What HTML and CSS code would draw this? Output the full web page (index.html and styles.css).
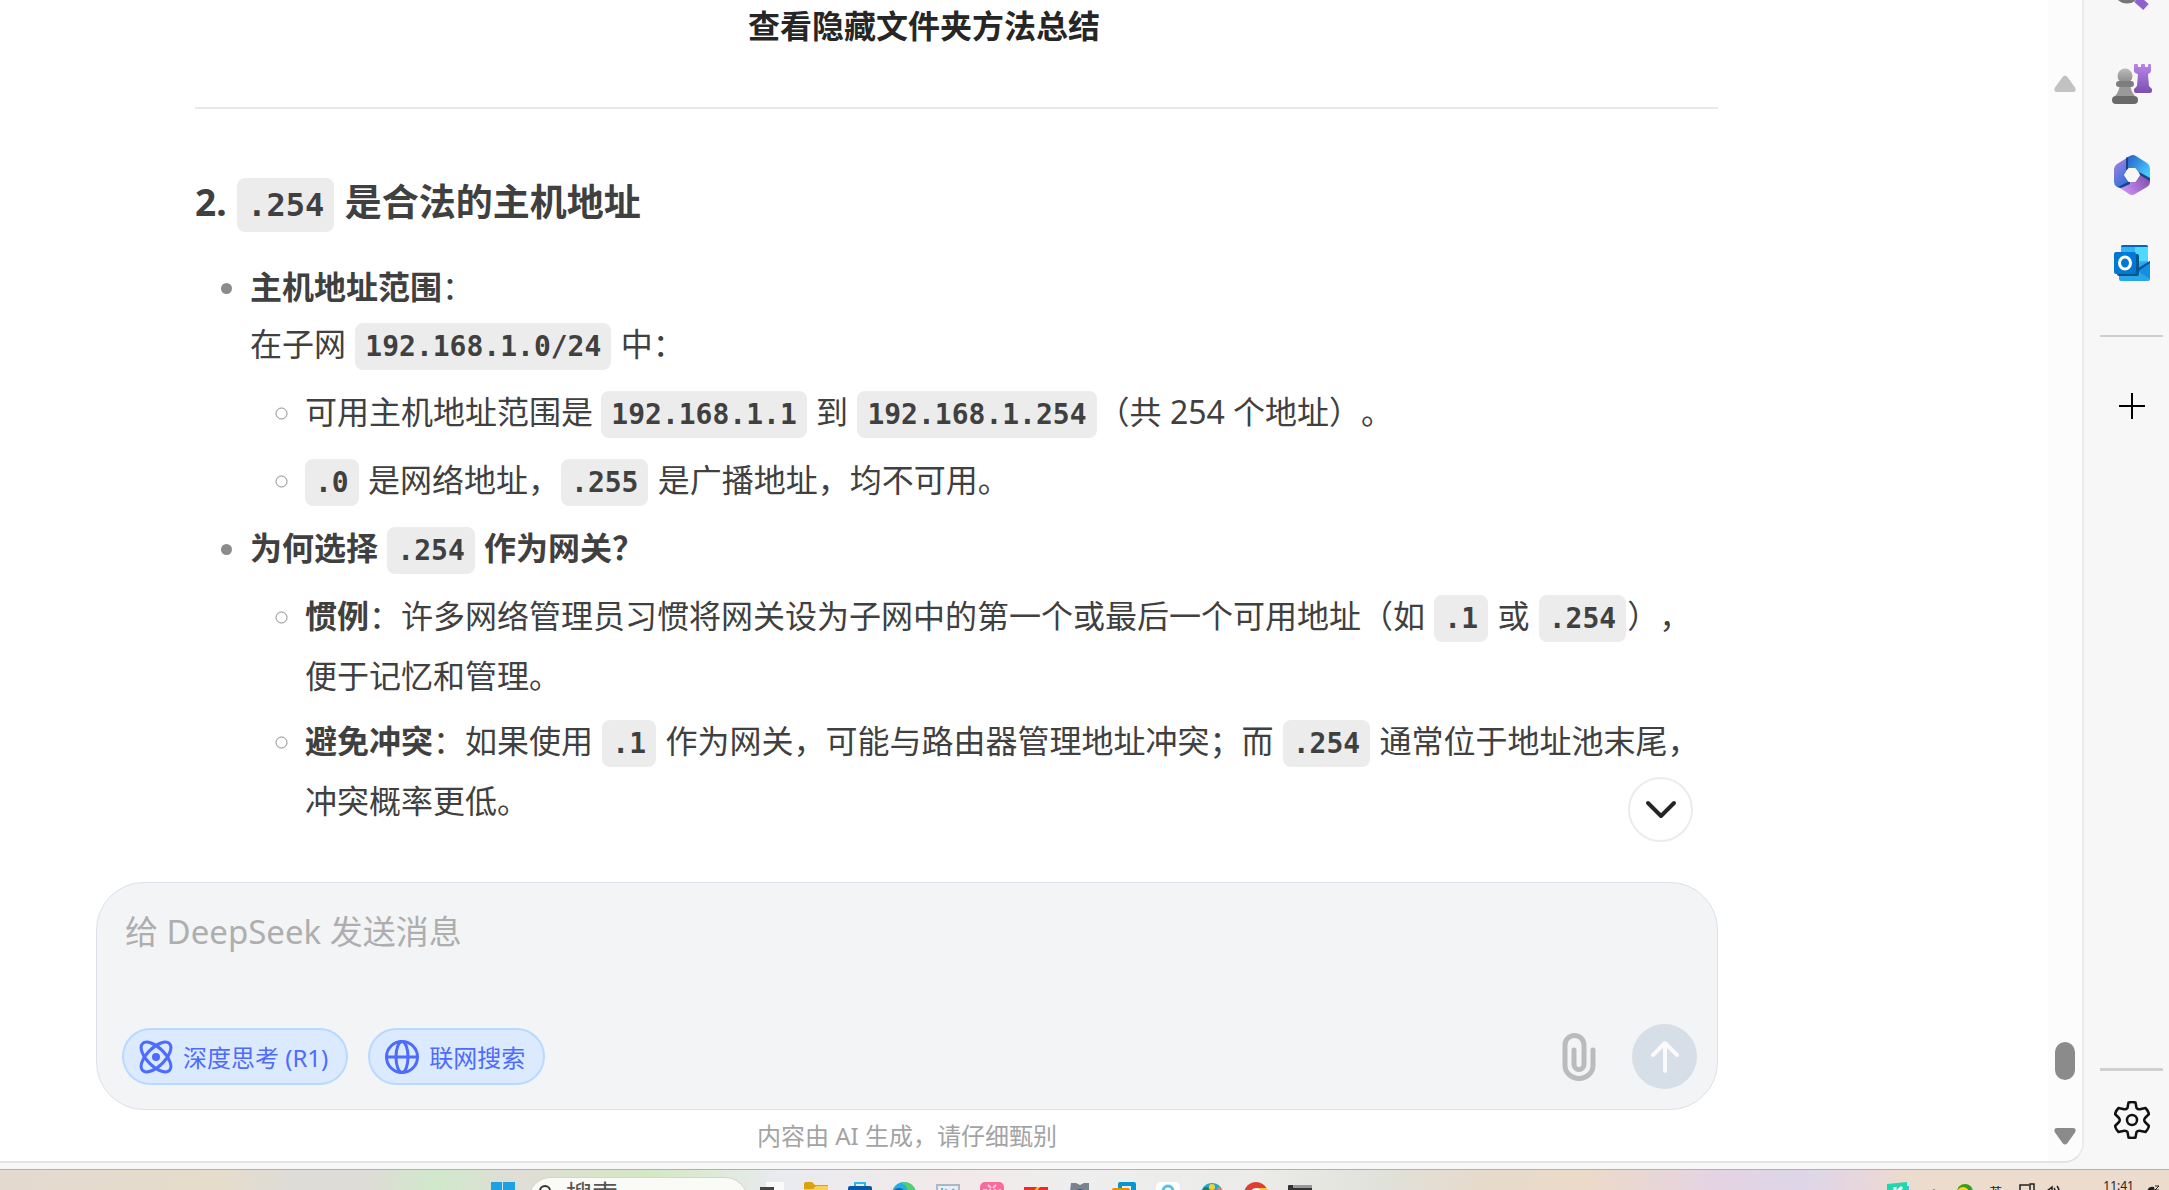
FILE: index.html
```html
<!DOCTYPE html>
<html lang="zh-CN">

<head>
    <meta charset="UTF-8">
    <meta name="viewport" content="width=device-width, initial-scale=1.0">
    <title>查看隐藏文件夹方法总结 - DeepSeek</title>
    <link rel="stylesheet" href="styles.css">
</head>

<body>
    <div class="browser">
        <div class="page">
            <main class="chat">
                <header class="chat-header">
                    <h1>查看隐藏文件夹方法总结</h1>
                </header>
                <div class="messages">
                    <hr>
                    <h3>2. <code>.254</code> 是合法的主机地址</h3>
                    <ul>
                        <li>
                            <strong>主机地址范围</strong>：<br>
                            在子网 <code>192.168.1.0/24</code> 中：
                            <ul>
                                <li>可用主机地址范围是 <code>192.168.1.1</code> 到 <code>192.168.1.254</code>（共 254 个地址）。</li>
                                <li><code>.0</code> 是网络地址，<code>.255</code> 是广播地址，均不可用。</li>
                            </ul>
                        </li>
                        <li>
                            <strong>为何选择 <code>.254</code> 作为网关？</strong>
                            <ul>
                                <li><strong>惯例</strong>：许多网络管理员习惯将网关设为子网中的第一个或最后一个可用地址（如 <code>.1</code> 或 <code>.254</code>），便于记忆和管理。</li>
                                <li><strong>避免冲突</strong>：如果使用 <code>.1</code> 作为网关，可能与路由器管理地址冲突；而 <code>.254</code> 通常位于地址池末尾，冲突概率更低。</li>
                            </ul>
                        </li>
                    </ul>
                </div>
                <div class="composer-wrap">
                    <button class="scroll-down" aria-label="滚动到底部">
                        <svg width="32" height="20" viewBox="0 0 32 20"><path d="M3 3l13 13L29 3" fill="none" stroke="#262626" stroke-width="4" stroke-linecap="round" stroke-linejoin="round"/></svg>
                    </button>
                    <form class="composer">
                        <textarea rows="2" placeholder="给 DeepSeek 发送消息" aria-label="消息"></textarea>
                        <div class="tools">
                            <button type="button" class="pill">
                                <svg width="34" height="34" viewBox="0 0 34 34" fill="none" stroke="currentColor" stroke-width="3"><ellipse cx="17" cy="17" rx="19" ry="9" transform="rotate(45 17 17)"/><ellipse cx="17" cy="17" rx="19" ry="9" transform="rotate(-45 17 17)"/><circle cx="17" cy="17" r="4" fill="currentColor" stroke="none"/></svg>
                                深度思考 (R1)
                            </button>
                            <button type="button" class="pill">
                                <svg width="34" height="34" viewBox="0 0 34 34" fill="none" stroke="currentColor" stroke-width="3"><circle cx="17" cy="17" r="15.5"/><ellipse cx="17" cy="17" rx="6" ry="15.5"/><path d="M1.500 17h31"/></svg>
                                联网搜索
                            </button>
                            <button type="button" class="attach" aria-label="上传附件">
                                <svg width="34" height="48" viewBox="0 0 34 48"><path d="M31 17v15.500a14 13 0 0 1-28 0V12a9.500 9.500 0 0 1 19 0v19.500a5 5 0 0 1-10 0V17" fill="none" stroke="#bbb" stroke-width="5" stroke-linecap="round"/></svg>
                            </button>
                            <button type="submit" class="send" aria-label="发送">
                                <svg width="30" height="34" viewBox="0 0 30 34"><path d="M15 31V3M3 15L15 3l12 12" fill="none" stroke="#fafafa" stroke-width="4" stroke-linecap="round" stroke-linejoin="round"/></svg>
                            </button>
                        </div>
                    </form>
                    <p class="notice">内容由 AI 生成，请仔细甄别</p>
                </div>
            </main>
            <div class="scrollbar">
                <svg width="22" height="17" viewBox="0 0 22 17"><path d="M8.500 2Q11 -1 13.500 2L21 12.500Q23 17 19 17H3Q-1 17 1 12.500Z" fill="#c2c2c2"/></svg>
                <div class="track"><div class="thumb"></div></div>
                <svg width="22" height="17" viewBox="0 0 22 17"><path d="M8.500 15Q11 18 13.500 15L21 4.500Q23 0 19 0H3Q-1 0 1 4.500Z" fill="#8b8b8b"/></svg>
            </div>
        </div>
        <aside class="sidebar">
            <button class="side-search" aria-label="搜索">
                <svg width="40" height="40" viewBox="0 0 40 40"><defs><linearGradient id="lilac" x1="0" y1="0" x2="0" y2="1"><stop offset="0" stop-color="#bb84ea"/><stop offset="1" stop-color="#7a50b0"/></linearGradient><linearGradient id="grey" x1="0" y1="0" x2="0" y2="1"><stop offset="0" stop-color="#bbb"/><stop offset="1" stop-color="#888"/></linearGradient></defs><circle cx="15" cy="18" r="11" fill="none" stroke="#777" stroke-width="5"/><path d="M25 27l9 8" stroke="#9060cc" stroke-width="8"/></svg>
            </button>
            <button aria-label="游戏">
                <svg width="40" height="41" viewBox="0 0 40 41"><path d="M22 1q0-1 1-1h2q1 0 1 1v2h3V1q0-1 1-1h2q1 0 1 1v2h3V1q0-1 1-1h1q1 0 1 1v6q0 2-3 3l1 12 3 3v2q0 2-2 2H24q-2 0-2-2v-2l3-3 1-12q-4-1-4-3z" fill="url(#lilac)"/><path d="M8 20h10q1 8 5 12H3q4-4 5-12z" fill="#999"/><circle cx="13" cy="12" r="7.500" fill="url(#grey)"/><rect x="4" y="17" width="18" height="6" rx="3" fill="#7d7d7d"/><rect y="32" width="26" height="8" rx="4" fill="#6a6a6a"/></svg>
            </button>
            <button aria-label="Microsoft 365">
                <svg width="36" height="40" viewBox="0 0 36 40"><defs><linearGradient id="m1" x1="0" y1="0" x2="0.500" y2="1"><stop offset="0" stop-color="#b583e6"/><stop offset="1" stop-color="#2f73d8"/></linearGradient><linearGradient id="m2" x1="0" y1="0" x2="1" y2="0.700"><stop offset="0" stop-color="#2458c4"/><stop offset="1" stop-color="#48cfff"/></linearGradient><linearGradient id="m3" x1="0" y1="0.500" x2="1" y2="0"><stop offset="0" stop-color="#ca8cf5"/><stop offset="1" stop-color="#74489f"/></linearGradient></defs><path d="M16 1L3 9q-3 2-3 5v13q0 3 3 5l3 1 10-6-4-7V14l4-13z" fill="url(#m1)"/><path d="M12 3l4-2q3-2 6 0l11 7q3 2 3 5v12L24 17q-6-7-12-2z" fill="url(#m2)"/><path d="M6 33l11-6q8-1 7-10l12 7v3q0 3-3 5l-12 7q-3 2-6 0z" fill="url(#m3)"/><path d="M4 32l12-6v3l-9 4zM25 17l11 6v3l-10-6zM12 3l2-1v12l-2 2z" fill="#174386"/><path d="M15 14h6l4 6-4 6h-6l-4-6z" fill="#f7f7f7" stroke="#f7f7f7" stroke-width="2" stroke-linejoin="round"/></svg>
            </button>
            <button aria-label="Outlook">
                <svg width="36" height="36" viewBox="0 0 36 36"><rect x="7" width="27" height="28" rx="2" fill="#33b5ef"/><path d="M9 0h23q2 0 2 2H7q0-2 2-2z" fill="#0a64b5"/><path d="M21 2h13v14H21z" fill="#50d9ff"/><path d="M5 18h18l13-1v17q0 2-2 2H7q-2 0-2-2z" fill="#28a8ea"/><path d="M36 16v18l-14-9z" fill="#148fe0"/><path d="M21 25l15-9v2l-13 9z" fill="#0a4f9e"/><rect x="3" y="9" width="22" height="22" rx="2" fill="#07558f"/><rect y="7" width="22" height="22" rx="2" fill="#0078d4"/><ellipse cx="11" cy="18" rx="5.500" ry="6" fill="none" stroke="#fff" stroke-width="3"/></svg>
            </button>
            <hr class="top-line">
            <button class="add" aria-label="添加">
                <svg width="26" height="26" viewBox="0 0 26 26"><path d="M13 0v26M0 13h26" stroke="#000" stroke-width="2"/></svg>
            </button>
            <hr class="bottom-line">
            <button aria-label="设置">
                <svg width="36" height="38" viewBox="0 0 36 38"><path d="M14.500 1.500q3.500-1 7 0l1 5.500q1.500 2 4.500 1l4.500-1q2.500 2.500 3.500 6l-4 4q-1.500 2 0 4l4 4q-1 3.500-3.500 6l-4.500-1q-3-1-4.500 1l-1 5.500q-3.500 1-7 0l-1-5.500q-1.500-2-4.500-1l-4.500 1q-2.500-2.500-3.500-6l4-4q1.500-2 0-4l-4-4q1-3.500 3.500-6L9 8q3 1 4.500-1z" fill="none" stroke="#111" stroke-width="2.500" stroke-linejoin="round"/><circle cx="18" cy="19" r="5" fill="none" stroke="#111" stroke-width="2.500"/></svg>
            </button>
        </aside>
    </div>
    <footer class="taskbar">
        <div class="apps">
            <svg width="24" height="24" viewBox="0 0 24 24"><path d="M0 0h11v11H0zM12 0h12v11H12zM0 12h11v12H0zM12 12h12v12H12z" fill="#1da0e4"/></svg>
            <button class="task-search">
                <svg width="14" height="14" viewBox="0 0 14 14"><circle cx="6" cy="6" r="5" fill="none" stroke="#333" stroke-width="2"/></svg>
                搜索
            </button>
            <svg width="24" height="24" viewBox="0 0 24 24"><rect x="6" width="18" height="16" fill="#fafafa"/><rect y="5" width="14" height="16" fill="#444"/></svg>
            <svg width="24" height="24" viewBox="0 0 24 24"><path d="M0 2q0-2 2-2h6l3 3h13v6H0z" fill="#dda010"/><path d="M0 7h9l3-3h12v18H0z" fill="#ffd04d"/></svg>
            <svg width="24" height="24" viewBox="0 0 24 24"><path d="M7 5V1h10v4" fill="none" stroke="#28b8f0" stroke-width="2"/><rect y="4" width="24" height="19" rx="2" fill="#0d55a5"/></svg>
            <svg width="24" height="24" viewBox="0 0 24 24"><circle cx="12" cy="12" r="12" fill="#22aee0"/><path d="M12 0a12 12 0 0 1 12 12h-9q2-8-6-11z" fill="#52d070"/><circle cx="7" cy="13" r="7" fill="#1166b8"/></svg>
            <svg width="24" height="24" viewBox="0 0 24 24"><rect x="1" y="3" width="22" height="19" fill="#e9eef5" stroke="#a9b8c7" stroke-width="2"/><path d="M6 6v5l4-3 4 3 4-4" fill="none" stroke="#6aa8d8" stroke-width="2"/></svg>
            <svg width="24" height="24" viewBox="0 0 24 24"><rect width="24" height="24" rx="5" fill="#fb6a9c"/><path d="M8 3l3 3M16 3l-3 3M3 8h4M9 8h2M14 8h2M19 8h2" stroke="#ffd0e0" stroke-width="2"/></svg>
            <svg width="24" height="24" viewBox="0 0 24 24"><path d="M0 5h24v5H0z" fill="#f02a20"/><path d="M9 10l4-5h3l-4 5z" fill="#ffc520"/></svg>
            <svg width="24" height="24" viewBox="0 0 24 24"><path d="M3 1h5l4 2 4-2h5v8H2z" fill="#7a838c"/><circle cx="12" cy="12" r="9" fill="#7a838c"/><circle cx="12" cy="12" r="5" fill="#2058a0"/></svg>
            <svg width="24" height="24" viewBox="0 0 24 24"><rect x="6" width="18" height="18" rx="2" fill="#0895d3"/><rect x="10" y="4" width="9" height="9" fill="#e8eef2"/><rect y="6" width="18" height="18" rx="2" fill="#f08c00"/></svg>
            <svg width="24" height="24" viewBox="0 0 24 24"><rect width="24" height="24" rx="5" fill="#fff"/><circle cx="12" cy="9" r="5" fill="none" stroke="#50c0ee" stroke-width="3"/></svg>
            <svg width="24" height="24" viewBox="0 0 24 24"><circle cx="12" cy="12" r="11" fill="#22a6d8"/><circle cx="12" cy="5" r="3" fill="#f8d030"/><circle cx="6" cy="8" r="3" fill="#208040"/><circle cx="19" cy="7" r="2" fill="#f08040"/></svg>
            <svg width="24" height="24" viewBox="0 0 24 24"><circle cx="12" cy="12" r="12" fill="#dd4032"/><path d="M12 6h11v8H12z" fill="#fcc934"/><circle cx="12" cy="12" r="6" fill="#fff"/><circle cx="12" cy="12" r="4" fill="#1a73e8"/></svg>
            <svg width="24" height="24" viewBox="0 0 24 24"><rect y="3" width="24" height="20" rx="1" fill="#333"/><path d="M5 3h19v3H5z" fill="#999"/></svg>
        </div>
        <div class="tray">
            <svg width="24" height="20" viewBox="0 0 24 20"><path d="M6 4h16v16H6z" fill="#50b8f0"/><path d="M0 2l20-2v20H0z" fill="#1fd8b0"/><path d="M8 5v8M15 5l-6 6" stroke="#fff" stroke-width="3"/></svg>
            <svg class="more" width="10" height="14" viewBox="0 0 10 14"><path d="M1 12l4-4 4 4" fill="none" stroke="#444" stroke-width="1.500"/></svg>
            <svg class="emoji" width="16" height="16" viewBox="0 0 16 16"><circle cx="8" cy="10" r="8" fill="#3b9a20"/><circle cx="6" cy="11" r="6" fill="#f5dd10"/></svg>
            <span class="ime">英</span>
            <svg width="16" height="16" viewBox="0 0 16 16"><path d="M10 14H1V3h9M11 2h4v8h-4z" fill="none" stroke="#222" stroke-width="1.500"/></svg>
            <svg class="volume" width="14" height="16" viewBox="0 0 14 16"><path d="M0 9l5-4v10zM7 6q2 3 0 6M10 4q4 5 0 11" fill="none" stroke="#222" stroke-width="1.500"/></svg>
            <time>11:41</time>
            <svg width="14" height="18" viewBox="0 0 14 18"><path d="M1 15V10q1-6 7-5l2 8v2z" fill="#222"/><path d="M9 4h4l-4 4h4" fill="none" stroke="#222"/></svg>
        </div>
    </footer>
</body>

</html>
```
FILE: styles.css
```css
* {
    box-sizing: border-box;
}

body {
    margin: 0;
    height: 100vh;
    display: flex;
    flex-direction: column;
    overflow: hidden;
    background-color: #f7f7f7;
    color: #404040;
    font-family: "Noto Sans", "Noto Sans CJK SC", sans-serif;
    font-size: 32px;
    line-height: 57px;
    text-spacing-trim: space-all;
}

button {
    display: flex;
    align-items: center;
    justify-content: center;
    padding: 0;
    border: none;
    background: none;
    font-family: inherit;
    cursor: pointer;
}

svg {
    display: block;
    flex-shrink: 0;
}

.browser {
    flex: 1;
    min-height: 0;
    display: flex;
    padding-bottom: 6px;
}

.page {
    flex: 1;
    min-width: 0;
    display: flex;
    background-color: #fff;
    border-right: 2px solid #ebebeb;
    border-bottom: 2px solid #e4e4e4;
    border-bottom-right-radius: 20px;
    overflow: hidden;
}

/* chat */
.chat {
    flex: 1;
    min-width: 0;
    display: flex;
    flex-direction: column;
}

.chat-header {
    padding-right: 200px;
    text-align: center;
}

.chat-header h1 {
    margin: 0;
    color: #262626;
    font-size: 32px;
    line-height: 52px;
}

.messages {
    flex: 1;
    min-height: 0;
    overflow: hidden;
    padding: 55px 330px 0 195px;
}

.messages hr {
    margin: 0 0 64px;
    border: none;
    border-top: 2px solid #e9e9e9;
}

.messages h3 {
    margin: 0 0 24px;
    font-size: 37px;
    line-height: 58px;
}

.messages ul {
    margin: 0;
    padding-left: 55px;
}

.messages li::marker {
    color: #8b8b8b;
}

.messages ul ul,
.messages li + li {
    margin-top: 8px;
}

.messages code {
    margin: 0 1px;
    padding: 7px 10px;
    border-radius: 8px;
    background-color: #ececec;
    font-family: "DejaVu Sans Mono", monospace;
    font-size: 28px;
    font-weight: bold;
}

.messages li > code:first-child {
    margin-left: 0;
}

.messages h3 code {
    padding: 8px 10px;
    font-size: 32px;
}

/* message box */
.composer-wrap {
    position: relative;
    padding: 0 330px 0 96px;
}

.scroll-down {
    position: absolute;
    right: 355px;
    bottom: calc(100% + 40px);
    width: 65px;
    height: 65px;
    border: 2px solid #ececec;
    border-radius: 50%;
    background-color: #fff;
}

.composer {
    padding: 20px 20px 20px 25px;
    border: 1px solid #dce0ea;
    border-radius: 48px;
    background-color: #f3f4f6;
}

.composer textarea {
    display: block;
    width: 100%;
    height: 121px;
    padding: 0 3px;
    border: none;
    outline: none;
    resize: none;
    background: none;
    color: #404040;
    font: inherit;
    font-size: 33px;
}

.composer textarea::placeholder {
    color: #aeaeae;
}

.tools {
    display: flex;
    align-items: center;
}

.pill {
    gap: 10px;
    height: 57px;
    margin-right: 20px;
    padding: 0 18px 0 15px;
    border: 2px solid #b9daff;
    border-radius: 29px;
    background-color: #dbeafe;
    color: #4d6bfe;
    font-size: 24px;
}

.attach {
    margin-left: auto;
}

.send {
    width: 65px;
    height: 65px;
    margin-left: 36px;
    border-radius: 50%;
    background-color: #d6dee8;
}

.notice {
    margin: 0;
    text-align: center;
    color: #a3a3a3;
    font-size: 24px;
    line-height: 51px;
}

.scrollbar {
    width: 34px;
    display: flex;
    flex-direction: column;
    align-items: center;
    padding: 75px 0 16px;
    background-color: #fcfcfc;
}

.track {
    flex: 1;
    display: flex;
    align-items: flex-end;
    padding-bottom: 48px;
}

.thumb {
    width: 20px;
    height: 38px;
    border-radius: 10px;
    background-color: #8b8b8b;
}

/* browser sidebar */
.sidebar {
    width: 85px;
    display: flex;
    flex-direction: column;
    align-items: center;
    gap: 50px;
    padding: 0 0 24px 10px;
}

.side-search {
    height: 12px;
    margin-bottom: 2px;
    align-items: flex-end;
}

.sidebar hr {
    width: 63px;
    margin: 0;
    border: none;
    border-top: 2px solid #d0d0d0;
}

.sidebar .top-line {
    margin: 4px 0 6px;
}

.sidebar .bottom-line {
    margin-top: auto;
    margin-bottom: -20px;
    border-top-width: 3px;
}

/* windows taskbar */
.taskbar {
    height: 21px;
    display: flex;
    align-items: flex-start;
    justify-content: space-between;
    overflow: hidden;
    padding: 0 9px 0 491px;
    border-top: 1px solid #b0b3aa;
    background: linear-gradient(90deg, #e3d9cf 0, #e6dccb 10%, #dedcd6 13%, #dedcd6 17%, #d0e8cb 20%, #e0ddd6 24%, #d3e8c3 30%, #e9ebf0 36%, #f2e9e9 44%, #eeeeee 50%, #ebebe9 58%, #e0e1d9 64%, #e6dacc 68%, #ebdac8 73%, #e5d3e3 79%, #ddd6e8 83%, #e8d6dc 86%, #ebdccd 88%, #ebdccd 100%);
}

.apps {
    display: flex;
    align-items: flex-start;
    gap: 20px;
    padding-top: 12px;
}

.task-search {
    gap: 13px;
    align-items: flex-start;
    justify-content: flex-start;
    width: 220px;
    height: 46px;
    margin: -5px -8px 0 -7px;
    padding-left: 10px;
    border: 1px solid #d5d5d0;
    border-radius: 23px;
    background-color: #fafaf7;
    color: #555;
    font-size: 26px;
    line-height: 32px;
}

.task-search svg {
    margin-top: 7px;
}

.tray {
    display: flex;
    align-items: flex-start;
    gap: 12px;
    padding-top: 12px;
    color: #222;
    font-size: 13px;
    line-height: 20px;
}

.tray .more {
    margin-left: 6px;
}

.emoji {
    margin-left: 6px;
}

.ime {
    margin: 0 5px 0 4px;
}

.volume {
    margin-right: 30px;
}

.tray time {
    font-size: 12px;
    line-height: 8px;
}
```
